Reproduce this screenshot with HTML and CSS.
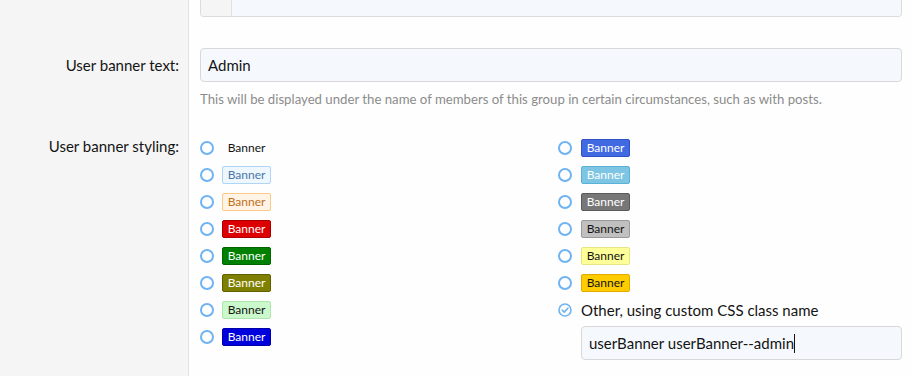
FILE: index.html
```html
<!DOCTYPE html>
<html>
<head>
<meta charset="utf-8">
<link rel="stylesheet" href="styles.css">
</head>
<body>
<div class="form">
  <div class="row row-top">
    <div class="label"></div>
    <div class="content">
      <div class="topbox"><div class="gutter"></div><div class="area"></div></div>
    </div>
  </div>
  <div class="row row-text">
    <div class="label"><span class="label-text">User banner text:</span></div>
    <div class="content">
      <div class="input">Admin</div>
      <div class="hint">This will be displayed under the name of members of this group in certain circumstances, such as with posts.</div>
    </div>
  </div>
  <div class="row row-style">
    <div class="label"><span class="label-text">User banner styling:</span></div>
    <div class="content">
      <div class="choices">
        <div class="col">
          <div class="opt"><span class="radio"></span><span class="banner b-plain">Banner</span></div>
          <div class="opt"><span class="radio"></span><span class="banner b-lightblue">Banner</span></div>
          <div class="opt"><span class="radio"></span><span class="banner b-lightorange">Banner</span></div>
          <div class="opt"><span class="radio"></span><span class="banner b-red">Banner</span></div>
          <div class="opt"><span class="radio"></span><span class="banner b-green">Banner</span></div>
          <div class="opt"><span class="radio"></span><span class="banner b-olive">Banner</span></div>
          <div class="opt"><span class="radio"></span><span class="banner b-lightgreen">Banner</span></div>
          <div class="opt"><span class="radio"></span><span class="banner b-blue">Banner</span></div>
        </div>
        <div class="col col-right">
          <div class="opt"><span class="radio"></span><span class="banner b-royal">Banner</span></div>
          <div class="opt"><span class="radio"></span><span class="banner b-sky">Banner</span></div>
          <div class="opt"><span class="radio"></span><span class="banner b-gray">Banner</span></div>
          <div class="opt"><span class="radio"></span><span class="banner b-silver">Banner</span></div>
          <div class="opt"><span class="radio"></span><span class="banner b-yellow">Banner</span></div>
          <div class="opt"><span class="radio"></span><span class="banner b-gold">Banner</span></div>
          <div class="opt"><span class="radio checked"><svg width="14" height="14" viewBox="0 0 14 14"><circle cx="7" cy="7" r="6" fill="none" stroke="#70b3f2" stroke-width="1.6"/><path d="M4.2 7.2 L6.2 9.1 L9.9 5.2" fill="none" stroke="#70b3f2" stroke-width="1.6" stroke-linecap="round" stroke-linejoin="round"/></svg></span><span class="other-text">Other, using custom CSS class name</span></div>
          <div class="input input-other">userBanner userBanner--admin<span class="caret"></span></div>
        </div>
      </div>
    </div>
  </div>
</div>
</body>
</html>
```
FILE: styles.css
```css
html, body {
  margin: 0;
  padding: 0;
  background: #fefefe;
}
body {
  font-family: Lato, "Noto Sans", sans-serif;
  color: #141414;
  font-size: 15px;
  width: 912px;
  height: 376px;
  overflow: hidden;
}
.form {
  display: flex;
  flex-direction: column;
  height: 376px;
  background: linear-gradient(to right, #f5f5f5 0, #f5f5f5 188px, #e3e3e3 188px, #e3e3e3 189px, #fefefe 189px);
}
.row {
  display: grid;
  grid-template-columns: 189px 1fr;
}
.label {
  text-align: right;
  padding-right: 10px;
}
.content {
  padding-left: 11px;
  padding-right: 10px;
}
.topbox {
  display: flex;
  height: 16px;
  border: 1px solid #dcdcdc;
  border-top: 0;
  border-radius: 0 0 4px 4px;
  overflow: hidden;
}
.gutter {
  width: 30px;
  background: #f5f5f5;
  border-right: 1px solid #e0e0e0;
}
.area {
  flex: 1;
  background: #f5f9fd;
}
.row-text {
  margin-top: 31px;
}
.row-text .label-text {
  display: block;
  line-height: 34px;
}
.input {
  box-sizing: border-box;
  height: 34px;
  border: 1px solid #d8d8d8;
  border-radius: 4px;
  background: #f5f9fd;
  font-size: 15px;
  line-height: 32px;
  padding-left: 7px;
}
.hint {
  margin-top: 8px;
  font-size: 13.2px;
  color: #8c8c8c;
  line-height: 18px;
}
.row-style {
  margin-top: 30px;
}
.row-style .label-text {
  display: block;
  line-height: 20px;
  margin-top: -2px;
}
.choices {
  display: grid;
  grid-template-columns: 358px 1fr;
}
.opt {
  display: flex;
  align-items: center;
  height: 27px;
}
.col .opt:first-child {
  margin-top: -4px;
}
.radio {
  box-sizing: border-box;
  width: 14px;
  height: 14px;
  border: 2px solid #70b3f2;
  border-radius: 50%;
  margin-right: 8px;
  flex: none;
}
.col-right .radio {
  margin-right: 9px;
}
.radio.checked {
  border: 0;
  display: flex;
}
.banner {
  box-sizing: border-box;
  display: inline-block;
  width: 49px;
  height: 18px;
  line-height: 16px;
  font-size: 12px;
  text-align: center;
  border: 1px solid transparent;
  border-radius: 2px;
}
.b-plain { color: #141414; }
.b-lightblue { background: #eef6fe; border-color: #aed4f6; color: #4a78a8; }
.b-lightorange { background: #fff4e6; border-color: #fdc986; color: #c0701a; }
.b-red { background: #dd0000; border-color: #aa0000; color: #fff; }
.b-green { background: #008000; border-color: #006400; color: #fff; }
.b-olive { background: #808000; border-color: #606000; color: #fff; }
.b-lightgreen { background: #ccf9cc; border-color: #aee6ae; color: #141414; }
.b-blue { background: #0000dd; border-color: #0000aa; color: #fff; }
.b-royal { background: #4169e1; border-color: #2f52c4; color: #fff; }
.b-sky { background: #7ec5e3; border-color: #5ab2d9; color: #fff; }
.b-gray { background: #777777; border-color: #5a5a5a; color: #fff; }
.b-silver { background: #c0c0c0; border-color: #9a9a9a; color: #141414; }
.b-yellow { background: #ffff99; border-color: #e6e680; color: #141414; }
.b-gold { background: #ffcc00; border-color: #e0aa00; color: #141414; }
.other-text {
  font-size: 15px;
}
.input-other {
  margin-top: 3px;
  margin-left: 23px;
}
.caret {
  display: inline-block;
  width: 1px;
  height: 19px;
  background: #141414;
  vertical-align: -4px;
}
```
